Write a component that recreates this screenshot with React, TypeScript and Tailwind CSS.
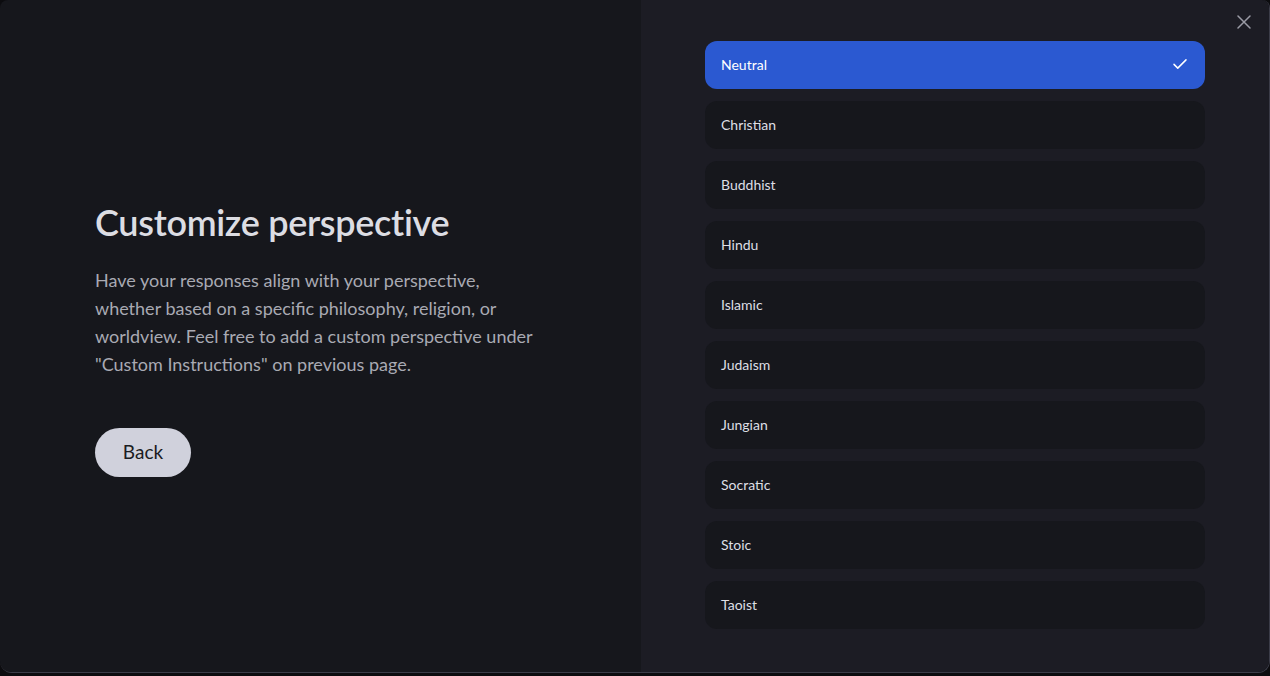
import React, { useState } from "react";

const options = [
  "Neutral",
  "Christian",
  "Buddhist",
  "Hindu",
  "Islamic",
  "Judaism",
  "Jungian",
  "Socratic",
  "Stoic",
  "Taoist",
];

const App: React.FC = () => {
  const [selected, setSelected] = useState<string>("Neutral");

  return (
    <div
      className="h-[676px] w-full bg-[#0c0c0f] overflow-hidden"
      style={{ fontFamily: "Lato, 'Noto Sans', sans-serif" }}
    >
      <div className="relative flex h-[673px] w-full overflow-hidden rounded-t-[8px] rounded-b-[12px] border-b border-r border-[#3b3c48]">
        {/* left */}
        <div className="flex w-[641px] shrink-0 flex-col justify-center bg-[#16171c] pl-[95px] pr-[100px] pt-[4px]">
          <h1 className="text-[36px] font-semibold leading-[44px] tracking-[-0.3px] text-[#dcdde3]">
            Customize perspective
          </h1>
          <p className="mt-[22px] text-[18px] leading-[28px] text-[#a9aab3]">
            Have your responses align with your perspective, whether based on a
            specific philosophy, religion, or worldview. Feel free to add a
            custom perspective under "Custom Instructions" on previous page.
          </p>
          <div className="mt-[50px]">
            <button className="h-[49px] w-[96px] rounded-full bg-[#d0d1dc] text-[19px] text-[#1b1c22]">
              Back
            </button>
          </div>
        </div>

        {/* right */}
        <div className="flex flex-1 flex-col bg-[#1c1c24] pl-[64px] pt-[41px]">
          <div className="flex w-[500px] flex-col gap-[12px]">
            {options.map((o) => {
              const active = o === selected;
              return (
                <button
                  key={o}
                  onClick={() => setSelected(o)}
                  className={`flex h-[48px] items-center justify-between rounded-[12px] px-[16px] pb-[2px] text-left text-[14px] ${
                    active
                      ? "bg-[#2b59d1] text-white"
                      : "bg-[#16171c] text-[#dedfe5]"
                  }`}
                >
                  <span>{o}</span>
                  {active && (
                    <svg
                      width="18"
                      height="18"
                      viewBox="0 0 24 24"
                      fill="none"
                      stroke="currentColor"
                      strokeWidth="2"
                      strokeLinecap="round"
                      strokeLinejoin="round"
                    >
                      <path d="M4 12.5l5 5L20 6.5" />
                    </svg>
                  )}
                </button>
              );
            })}
          </div>
        </div>

        <button className="absolute right-[18px] top-[15px] text-[#9a9ba5]">
          <svg
            width="14"
            height="14"
            viewBox="0 0 14 14"
            fill="none"
            stroke="currentColor"
            strokeWidth="1.5"
            strokeLinecap="round"
          >
            <path d="M1 1l12 12M13 1L1 13" />
          </svg>
        </button>
      </div>
    </div>
  );
};

export default App;
